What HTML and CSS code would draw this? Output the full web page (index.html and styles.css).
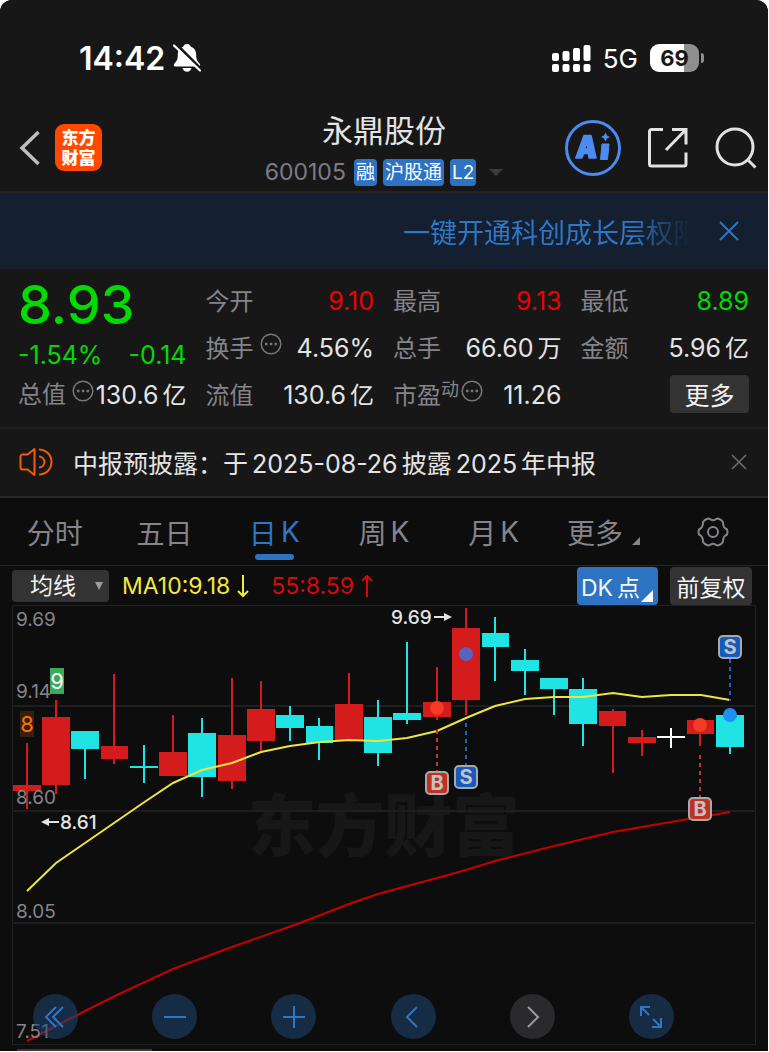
FILE: index.html
```html
<!DOCTYPE html>
<html lang="zh-CN">
<head>
  <meta charset="UTF-8">
  <meta name="viewport" content="width=device-width, initial-scale=1.0">
  <title>永鼎股份 600105</title>
  <link rel="stylesheet" href="styles.css">
</head>
<body>
  <div class="app">
    <!-- Status bar -->
    <div class="status-bar">
      <span class="time">14:42</span>
      <svg class="bell" width="28" height="30" viewBox="0 0 28 30">
        <path d="M14 1c-2 0-3.400 1.200-3.800 2.800C6.500 5 4.800 8 4.800 12c0 5-1.600 6.500-3.600 9-.8 1.200-.3 2.500 1.200 2.500h23.200c1.500 0 2-1.300 1.200-2.500-2-2.500-3.600-4-3.600-9 0-4-1.700-7-5.400-8.200C17.400 2.200 16 1 14 1zM9.500 25c.6 2.300 2.300 3.700 4.500 3.700s3.900-1.400 4.500-3.700z" fill="#fff"/>
        <path d="M3 1l26 26" stroke="#171717" stroke-width="3"/>
        <path d="M1 2.500l26 25" stroke="#fff" stroke-width="2.200" stroke-linecap="round"/>
      </svg>
      <div class="status-right">
        <svg width="39" height="28" viewBox="0 0 39 28" fill="#fff">
          <rect x="0" y="9" width="7" height="8" rx="2"/>
          <rect x="10.500" y="7" width="7" height="10" rx="2"/>
          <rect x="21" y="4" width="7" height="13" rx="2"/>
          <rect x="31.500" y="1" width="7" height="16" rx="2"/>
          <rect x="0" y="20" width="7" height="8" rx="2"/>
          <rect x="10.500" y="20" width="7" height="8" rx="2"/>
          <rect x="21" y="20" width="7" height="8" rx="2"/>
          <rect x="31.500" y="20" width="7" height="8" rx="2"/>
        </svg>
        <span class="network">5G</span>
        <span class="battery">69</span>
      </div>
    </div>

    <!-- Header -->
    <header class="header">
      <div class="header-left">
        <button type="button" class="icon-btn" aria-label="返回">
          <svg width="22" height="36" viewBox="0 0 22 36" fill="none" stroke="#bdbdbd" stroke-width="3.500">
            <path d="M19.500 2L3 18l16.500 16"/>
          </svg>
        </button>
        <a href="#" class="logo">东方<br>财富</a>
      </div>
      <div class="header-title">
        <h1>永鼎股份</h1>
        <div class="stock-info">
          <span class="code">600105</span>
          <span class="tag">融</span>
          <span class="tag">沪股通</span>
          <span class="tag">L2</span>
          <span class="caret"></span>
        </div>
      </div>
      <div class="header-right">
        <button type="button" class="icon-btn" aria-label="Ai">
          <svg width="56" height="56" viewBox="0 0 56 56">
            <circle cx="28" cy="28" r="26.500" fill="none" stroke="#4c8bf0" stroke-width="3"/>
            <path fill="#4c8bf0" fill-rule="evenodd" stroke="#4c8bf0" stroke-width="1.500" stroke-linejoin="round" d="M19 15.500h7l5 22.500h-7l-.6-4.500h-4.600l-2 4.500h-6zM22 22.500l-2.300 6.500h3.300z"/>
            <path fill="#4c8bf0" stroke="#4c8bf0" stroke-width="1" stroke-linejoin="round" d="M37 24h7l-1.500 15.500h-7z"/>
            <path fill="#4c8bf0" d="M40.500 12.500l1.500 3 3 1.500-3 1.500-1.500 3-1.500-3-3-1.500 3-1.500z"/>
          </svg>
        </button>
        <button type="button" class="icon-btn" aria-label="分享">
          <svg width="42" height="42" viewBox="0 0 42 42" fill="none" stroke="#e2e2e2" stroke-width="3">
            <path d="M16 2.500H4.500a2 2 0 0 0-2 2V37a2 2 0 0 0 2 2H37a2 2 0 0 0 2-2V25.500M25 2.500h14v15M39 2.500L19 23"/>
          </svg>
        </button>
        <button type="button" class="icon-btn" aria-label="搜索">
          <svg width="42" height="42" viewBox="0 0 42 42" fill="none" stroke="#e2e2e2" stroke-width="3">
            <circle cx="20" cy="20" r="18"/>
            <path d="M32.500 32.500l8 8"/>
          </svg>
        </button>
      </div>
    </header>

    <!-- Promotion banner -->
    <div class="banner">
      <a href="#" class="banner-text">一键开通科创成长层权限</a>
      <button type="button" class="icon-btn" aria-label="关闭">
        <svg width="20" height="20" viewBox="0 0 20 20" stroke="#2f76c6" stroke-width="2">
          <path d="M1 1l18 18M19 1L1 19"/>
        </svg>
      </button>
    </div>

    <!-- Quote -->
    <section class="quote">
      <div class="quote-main">
        <div class="price">8.93</div>
        <div class="change"><span>-1.54%</span><span>-0.14</span></div>
        <div class="total">
          <span class="label">总值</span>
          <svg class="dots" width="22" height="22" viewBox="0 0 22 22">
            <circle cx="11" cy="11" r="9.800" fill="none" stroke="#77777b" stroke-width="1.500"/>
            <path d="M5 11h2.500M9.800 11h2.500M14.500 11h2.500" stroke="#77777b" stroke-width="2.400"/>
          </svg>
          <span class="value">130.6<i>亿</i></span>
        </div>
      </div>
      <div class="quote-col">
        <div class="item"><span class="label">今开</span><span class="value red">9.10</span></div>
        <div class="item">
          <span class="label">换手</span>
          <svg class="dots" width="22" height="22" viewBox="0 0 22 22">
            <circle cx="11" cy="11" r="9.800" fill="none" stroke="#77777b" stroke-width="1.500"/>
            <path d="M5 11h2.500M9.800 11h2.500M14.500 11h2.500" stroke="#77777b" stroke-width="2.400"/>
          </svg>
          <span class="value">4.56%</span>
        </div>
        <div class="item"><span class="label">流值</span><span class="value">130.6<i>亿</i></span></div>
      </div>
      <div class="quote-col">
        <div class="item"><span class="label">最高</span><span class="value red">9.13</span></div>
        <div class="item"><span class="label">总手</span><span class="value">66.60<i>万</i></span></div>
        <div class="item">
          <span class="label">市盈<sup>动</sup></span>
          <svg class="dots tight" width="22" height="22" viewBox="0 0 22 22">
            <circle cx="11" cy="11" r="9.800" fill="none" stroke="#77777b" stroke-width="1.500"/>
            <path d="M5 11h2.500M9.800 11h2.500M14.500 11h2.500" stroke="#77777b" stroke-width="2.400"/>
          </svg>
          <span class="value">11.26</span>
        </div>
      </div>
      <div class="quote-col">
        <div class="item"><span class="label">最低</span><span class="value green">8.89</span></div>
        <div class="item"><span class="label">金额</span><span class="value">5.96<i>亿</i></span></div>
        <div class="item"><button type="button" class="more-btn">更多</button></div>
      </div>
    </section>

    <!-- Notice -->
    <div class="notice">
      <svg width="34" height="30" viewBox="0 0 34 30" fill="none" stroke="#f25a0c" stroke-width="2">
        <path d="M15.500 2v26l-7-5.500H3.500a2 2 0 0 1-2-2V9.500a2 2 0 0 1 2-2h5z" stroke-linejoin="round"/>
        <path d="M20 9.500a5.500 5.500 0 0 1 0 11M20 2.500c7.500.5 12.500 5.500 12.500 12.500S27.500 27 20 27.500"/>
      </svg>
      <a href="#" class="notice-text">中报预披露：于<b>2025-08-26</b>披露<b>2025</b>年中报</a>
      <button type="button" class="icon-btn" aria-label="关闭">
        <svg width="16" height="16" viewBox="0 0 16 16" stroke="#6c6c6c" stroke-width="1.600">
          <path d="M1 1l14 14M15 1L1 15"/>
        </svg>
      </button>
    </div>

    <!-- Period tabs -->
    <nav class="tabs">
      <button type="button">分时</button>
      <button type="button">五日</button>
      <button type="button" class="active">日<b>K</b></button>
      <button type="button">周<b>K</b></button>
      <button type="button">月<b>K</b></button>
      <button type="button" class="tab-more">更多</button>
      <button type="button" aria-label="设置">
        <svg width="32" height="30" viewBox="0 0 32 30" fill="none" stroke="#85848a" stroke-width="2">
          <path stroke-linejoin="round" d="M11 1.500q2 0 2.800 1.200q2.200 1.200 4.400 0Q19 1.500 21 1.500q3.500 1 5 3.500 0 3.500 1 5 .8 1.300 3 2.500 1 2.500 0 5-2.200 1.200-3 2.500-1 1.500-1 5-1.500 2.500-5 3.500-2 0-2.800-1.200-2.200-1.200-4.400 0Q13 28.500 11 28.500q-3.500-1-5-3.500 0-3.500-1-5-.8-1.300-3-2.500-1-2.500 0-5 2.200-1.200 3-2.500 1-1.500 1-5 1.500-2.500 5-3.500z"/>
          <circle cx="16" cy="15" r="5"/>
        </svg>
      </button>
    </nav>

    <!-- Chart toolbar -->
    <div class="toolbar">
      <div class="select-box">
        <select aria-label="指标">
          <option>均线</option>
        </select>
      </div>
      <span class="ma10">MA10:9.18
        <svg width="12" height="24" viewBox="0 0 12 24" fill="none" stroke="#f3ea3a" stroke-width="2"><path d="M6 1v21M1 17l5 5 5-5"/></svg>
      </span>
      <span class="ma55">55:8.59
        <svg width="12" height="24" viewBox="0 0 12 24" fill="none" stroke="#d40a0a" stroke-width="2"><path d="M6 23V2M1 7l5-5 5 5"/></svg>
      </span>
      <button type="button" class="dk-btn">DK<i>点</i></button>
      <button type="button" class="fq-btn">前复权</button>
    </div>

    <!-- K line chart -->
    <div class="chart">
      <svg class="kline" viewBox="12 605 744 440">
        <text class="watermark" x="384" y="851">东方财富</text>
        <path class="grid" d="M12 706h744M12 811h744M12 923h744"/>
        <path class="frame" d="M12.500 605.500h743v439h-743z"/>

        <!-- candles: wick + body -->
        <path class="up" d="M26 743h2v66h-2zM13 785h28v6h-28z"/>
        <path class="up" d="M55 700h2v94h-2zM42 717h28v68h-28z"/>
        <path class="down" d="M84 731h2v48h-2zM71 731h28v18h-28z"/>
        <path class="up" d="M113 674h2v90h-2zM101 746h27v13h-27z"/>
        <path class="down" d="M143 745h2v38h-2zM130 766h28v2h-28z"/>
        <path class="up" d="M172 715h2v60h-2zM159 752h28v24h-28z"/>
        <path class="down" d="M201 718h2v79h-2zM188 733h28v44h-28z"/>
        <path class="up" d="M231 678h2v111h-2zM218 735h28v46h-28z"/>
        <path class="up" d="M260 681h2v71h-2zM247 709h28v32h-28z"/>
        <path class="down" d="M289 706h2v35h-2zM276 715h28v13h-28z"/>
        <path class="down" d="M318 718h2v42h-2zM306 726h27v17h-27z"/>
        <path class="up" d="M348 673h2v66h-2zM335 704h28v36h-28z"/>
        <path class="down" d="M377 700h2v66h-2zM364 717h28v36h-28z"/>
        <path class="down" d="M406 642h2v82h-2zM393 713h28v7h-28z"/>
        <path class="up" d="M436 667h2v53h-2zM423 702h28v15h-28z"/>
        <path class="up" d="M465 608h2v107h-2zM452 628h28v72h-28z"/>
        <path class="down" d="M494 617h2v64h-2zM482 633h27v14h-27z"/>
        <path class="down" d="M524 649h2v46h-2zM511 660h28v11h-28z"/>
        <path class="down" d="M553 678h2v37h-2zM540 678h28v11h-28z"/>
        <path class="down" d="M582 678h2v68h-2zM569 689h28v35h-28z"/>
        <path class="up" d="M612 709h2v64h-2zM599 711h27v15h-27z"/>
        <path class="up" d="M641 730h2v26h-2zM628 737h28v6h-28z"/>
        <path class="flat" d="M670 728h2v20h-2zM657 736h28v2h-28z"/>
        <path class="up" d="M699 720h2v26h-2zM687 720h27v14h-27z"/>
        <path class="down" d="M729 709h2v45h-2zM716 715h28v32h-28z"/>

        <polyline class="line-ma10" points="27,891 56,863 85,843 114,823 143,803 173,783 202,770 232,763 261,752 290,746 320,742 349,740 378,741 407,738 437,731 466,718 495,706 525,699 554,697 583,697 613,693 642,697 671,695 701,695 730,700"/>
        <polyline class="line-ma55" points="27,1041 85,1011 117,995 173,969 232,947 300,923 349,904 378,894 437,878 466,870 495,861 554,846 613,832 671,822 730,812"/>

        <!-- buy / sell points -->
        <circle cx="437" cy="708" r="7" fill="#f43a24"/>
        <circle cx="466" cy="654" r="7" fill="#5864bd"/>
        <circle cx="700" cy="725" r="7" fill="#f43a24"/>
        <circle cx="730" cy="715" r="7" fill="#1f8ff0"/>
        <path class="dash-b" d="M437 730v42M700 755v42"/>
        <path class="dash-s" d="M466 723v42M730 659v42"/>
        <g class="mark-b">
          <rect x="426" y="772" width="22" height="22" rx="4"/>
          <text x="437" y="790">B</text>
          <rect x="689" y="798" width="22" height="22" rx="4"/>
          <text x="700" y="816">B</text>
        </g>
        <g class="mark-s">
          <rect x="455" y="766" width="22" height="22" rx="4"/>
          <text x="466" y="784">S</text>
          <rect x="719" y="636" width="22" height="22" rx="4"/>
          <text x="730" y="654">S</text>
        </g>

        <!-- price axis -->
        <g class="axis">
          <text x="16" y="626">9.69</text>
          <text x="16" y="698">9.14</text>
          <text x="16" y="804">8.60</text>
          <text x="16" y="918">8.05</text>
          <text x="16" y="1038">7.51</text>
        </g>

        <rect x="50" y="668" width="14" height="26" fill="#3aab5d"/>
        <text class="seq" x="57" y="689" fill="#fff">9</text>
        <rect x="20" y="711" width="14" height="26" fill="#3a1d0b"/>
        <text class="seq" x="27" y="732" fill="#f2700c">8</text>

        <g class="extreme">
          <text x="391" y="624">9.69</text>
          <path d="M434 617h10"/>
          <path class="head" d="M444 613l8 4-8 4z"/>
          <text x="60" y="829">8.61</text>
          <path d="M48 822h11"/>
          <path class="head" d="M49 818l-8 4 8 4z"/>
        </g>
      </svg>

      <div class="chart-tools">
        <button type="button" aria-label="最早">
          <svg width="24" height="24" viewBox="0 0 24 24"><path d="M12 2L2 12l10 10M19 2L9 12l10 10"/></svg>
        </button>
        <button type="button" aria-label="缩小">
          <svg width="24" height="24" viewBox="0 0 24 24"><path d="M1 12h22"/></svg>
        </button>
        <button type="button" aria-label="放大">
          <svg width="24" height="24" viewBox="0 0 24 24"><path d="M1 12h22M12 1v22"/></svg>
        </button>
        <button type="button" aria-label="向前">
          <svg width="24" height="24" viewBox="0 0 24 24"><path d="M16 2L6 12l10 10"/></svg>
        </button>
        <button type="button" class="disabled" aria-label="向后">
          <svg width="24" height="24" viewBox="0 0 24 24"><path d="M8 2l10 10L8 22"/></svg>
        </button>
        <button type="button" aria-label="全屏">
          <svg width="24" height="24" viewBox="0 0 24 24"><path d="M2 11V2h9M2 2l8 8M22 13v9h-9M22 22l-8-8"/></svg>
        </button>
      </div>
    </div>
    <div class="scroll-track"><div class="scroll-thumb"></div></div>
  </div>
</body>
</html>
```
FILE: styles.css
```css
* {
  box-sizing: border-box;
}
body {
  margin: 0;
  background: #fff;
  font-family: Inter, "Noto Sans CJK SC", sans-serif;
  font-size: 24px;
  color: #e4e4e4;
}
button, select {
  font-family: inherit;
  border: none;
  margin: 0;
  padding: 0;
  background: none;
  cursor: pointer;
}
a {
  color: inherit;
  text-decoration: none;
}
i, b {
  font-style: normal;
  font-weight: 400;
}
svg {
  display: block;
  flex-shrink: 0;
}
.app {
  margin-right: 1px;
  background: #0d0d0d;
  border-radius: 12px 12px 0 0;
  overflow: hidden;
}
.icon-btn {
  display: flex;
}

/* status bar */
.status-bar {
  display: flex;
  align-items: center;
  height: 104px;
  padding: 12px 64px 0 79px;
  background: #171717;
  color: #fff;
}
.time {
  font-size: 32px;
  font-weight: 600;
}
.bell {
  margin-left: 8px;
}
.status-right {
  display: flex;
  align-items: center;
  gap: 12px;
  margin-left: auto;
}
.network {
  font-size: 26px;
  font-weight: 400;
}
.battery {
  position: relative;
  width: 49px;
  height: 28px;
  margin-right: 5px;
  border-radius: 9px;
  background: linear-gradient(to right, #fff 70%, #8e8e8e 70%);
  color: #171717;
  font-size: 22px;
  font-weight: 700;
  line-height: 28px;
  text-align: center;
}
.battery::after {
  content: "";
  position: absolute;
  top: 9px;
  right: -5px;
  width: 3px;
  height: 10px;
  border-radius: 0 4px 4px 0;
  background: #8e8e8e;
}

/* header */
.header {
  display: grid;
  grid-template-columns: 1fr auto 1fr;
  height: 89px;
  padding: 0 11px;
  background: #171717;
  border-bottom: 2px solid #232323;
}
.header-left, .header-right {
  display: flex;
  align-items: center;
}
.header-left {
  gap: 14px;
  padding-left: 8px;
}
.header-right {
  gap: 26px;
  justify-content: flex-end;
}
.logo {
  width: 47px;
  height: 47px;
  padding-top: 4px;
  border-radius: 9px;
  background: #ff4800;
  color: #fff;
  font-size: 17px;
  font-weight: 900;
  line-height: 20px;
  text-align: center;
}
.header-title {
  text-align: center;
}
.header-title h1 {
  margin: 6px 0 0;
  font-size: 31px;
  font-weight: 400;
  line-height: 42px;
}
.stock-info {
  display: flex;
  align-items: center;
  justify-content: center;
  gap: 6px;
  margin-top: 7px;
}
.code {
  margin-right: 2px;
  color: #7d7c83;
  font-size: 23px;
  line-height: 27px;
}
.tag {
  padding: 0 2px;
  border-radius: 4px;
  background: #2e72c2;
  color: #fff;
  font-size: 19px;
  line-height: 27px;
}
.caret {
  margin-left: 7px;
  border: 7px solid transparent;
  border-top-color: #3d3d3d;
  border-bottom: none;
}

/* banner */
.banner {
  display: flex;
  align-items: center;
  justify-content: flex-end;
  gap: 29px;
  height: 76px;
  padding: 0 29px 0 20px;
  background: #14202f;
}
.banner-text {
  width: 287px;
  overflow: hidden;
  white-space: nowrap;
  color: #2f76c6;
  font-size: 27px;
  -webkit-mask-image: linear-gradient(to right, #000 80%, transparent);
  mask-image: linear-gradient(to right, #000 80%, transparent);
}

/* quote */
.quote {
  display: grid;
  grid-template-columns: repeat(4, 1fr);
  gap: 19px;
  padding: 9px 19px 8px 18px;
  background: #171717;
  border-bottom: 2px solid #1f1f1f;
}
.price {
  color: #00dc00;
  font-size: 54px;
  font-weight: 500;
  line-height: 54px;
}
.change {
  display: flex;
  justify-content: space-between;
  color: #00dc00;
  font-size: 25px;
  line-height: 46px;
}
.total {
  display: flex;
  line-height: 34px;
}
.item {
  display: flex;
  height: 47px;
  line-height: 47px;
}
.label {
  color: #85848a;
  white-space: nowrap;
}
.label sup {
  font-size: 18px;
  line-height: 1;
  vertical-align: 8px;
}
.value {
  margin-left: auto;
  font-size: 25px;
  white-space: nowrap;
}
.value i {
  margin-left: 4px;
  font-size: 24px;
}
.dots {
  margin: 8px 0 0 6px;
}
.total .dots {
  margin-top: 2px;
}
.dots.tight {
  margin-left: 2px;
}
.red {
  color: #f00000;
}
.green {
  color: #00dc00;
}
.more-btn {
  width: 79px;
  height: 38px;
  margin: 3px 0 0 auto;
  border-radius: 4px;
  background: #333;
  color: #f0f0f0;
  font-size: 25px;
}

/* notice */
.notice {
  display: flex;
  align-items: center;
  height: 69px;
  padding: 0 21px 2px 19px;
  background: #171717;
  border-bottom: 2px solid #262626;
}
.notice-text {
  flex: 1;
  margin-left: 20px;
  font-size: 25px;
}
.notice-text b {
  margin: 0 4px;
}

/* tabs */
.tabs {
  display: grid;
  grid-template-columns: repeat(7, 1fr);
  height: 68px;
  border-bottom: 1px solid #262626;
}
.tabs button {
  position: relative;
  display: flex;
  align-items: center;
  justify-content: center;
  color: #85848a;
  font-size: 28px;
}
.tabs b {
  margin-left: 4px;
}
.tabs .active {
  color: #2f76c6;
}
.tabs .active::after {
  content: "";
  position: absolute;
  bottom: 5px;
  width: 39px;
  height: 6px;
  border-radius: 3px;
  background: #2e72c2;
}
.tab-more::after {
  content: "";
  align-self: flex-end;
  margin: 0 0 20px 9px;
  border: 4px solid #85848a;
  border-top-color: transparent;
  border-left-color: transparent;
}

/* toolbar */
.toolbar {
  display: flex;
  align-items: center;
  height: 39px;
  padding: 0 16px 0 12px;
}
.select-box {
  position: relative;
  width: 97px;
}
.select-box select {
  width: 100%;
  height: 32px;
  padding-left: 18px;
  border-radius: 4px;
  background: #333;
  color: #f0f0f0;
  font-size: 23px;
  appearance: none;
}
.select-box::after {
  content: "";
  position: absolute;
  top: 12px;
  right: 6px;
  border: 4px solid transparent;
  border-top: 8px solid #9a9a9a;
  border-bottom: none;
  pointer-events: none;
}
.ma10, .ma55 {
  display: flex;
  align-items: center;
  gap: 7px;
  font-size: 23px;
}
.ma10 {
  margin-left: 13px;
  color: #f3ea3a;
}
.ma55 {
  margin-left: 22px;
  color: #d40a0a;
}
.dk-btn, .fq-btn {
  height: 38px;
  border-radius: 4px;
  font-size: 23px;
  color: #f5f5f5;
}
.dk-btn {
  position: relative;
  width: 81px;
  margin-left: auto;
  padding-right: 14px;
  background: #2e72c2;
  white-space: nowrap;
}
.dk-btn i {
  margin-left: 4px;
}
.dk-btn::after {
  content: "";
  position: absolute;
  right: 5px;
  bottom: 3px;
  border: 6px solid #fff;
  border-top-color: transparent;
  border-left-color: transparent;
}
.fq-btn {
  width: 82px;
  margin-left: 12px;
  background: #333;
}

/* chart */
.chart {
  position: relative;
  margin: 0 12px;
}
.kline {
  width: 100%;
  height: auto;
}
.watermark {
  fill: #171717;
  font-size: 68px;
  font-weight: 900;
  text-anchor: middle;
}
.grid {
  stroke: #1e1e1e;
  stroke-width: 2;
}
.frame {
  fill: none;
  stroke: #222;
}
.up {
  fill: #d41c1c;
}
.down {
  fill: #20e4e4;
}
.flat {
  fill: #fff;
}
.line-ma10 {
  fill: none;
  stroke: #efe53c;
  stroke-width: 2;
}
.line-ma55 {
  fill: none;
  stroke: #c40000;
  stroke-width: 2;
}
.dash-b {
  stroke: #c43a2a;
  stroke-width: 2;
  stroke-dasharray: 4 4;
}
.dash-s {
  stroke: #1c60c8;
  stroke-width: 2;
  stroke-dasharray: 4 4;
}
.mark-b rect, .mark-s rect {
  stroke: #a9a9a9;
  stroke-width: 2;
}
.mark-b rect {
  fill: #bf3223;
}
.mark-s rect {
  fill: #1659bf;
}
.mark-b text, .mark-s text {
  fill: #c2c2c2;
  font-size: 20px;
  font-weight: 700;
  text-anchor: middle;
}
.axis {
  fill: #85848a;
  font-size: 19px;
}
.seq {
  font-size: 22px;
  text-anchor: middle;
}
.extreme {
  fill: #e4e4e4;
  font-size: 19px;
  font-weight: 500;
}
.extreme path {
  stroke: #e4e4e4;
  stroke-width: 2;
}
.extreme .head {
  stroke: none;
}
.chart-tools {
  position: absolute;
  left: 21px;
  right: 82px;
  bottom: 6px;
  display: flex;
  justify-content: space-between;
}
.chart-tools button {
  display: flex;
  align-items: center;
  justify-content: center;
  width: 45px;
  height: 45px;
  border-radius: 50%;
  background: rgba(31, 69, 114, 0.55);
}
.chart-tools path {
  fill: none;
  stroke: #2f76c6;
  stroke-width: 2;
}
.chart-tools .disabled {
  background: #2a2a2c;
}
.chart-tools .disabled path {
  stroke: #9a9a9a;
}
.scroll-track {
  height: 6px;
  padding: 4px 17px 0;
}
.scroll-thumb {
  width: 135px;
  height: 2px;
  background: #3a3a3a;
}
```
